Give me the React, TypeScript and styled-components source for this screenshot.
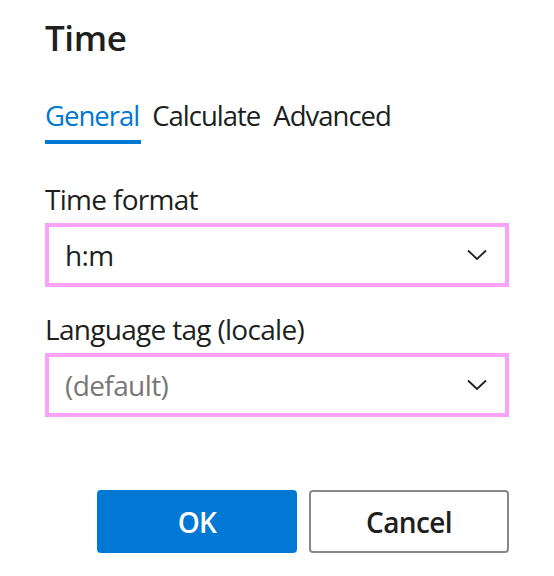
import styled, { createGlobalStyle } from 'styled-components';

const GlobalStyle = createGlobalStyle`
  html, body {
    margin: 0;
    padding: 0;
    background: #ffffff;
  }
  body {
    font-family: 'Open Sans', 'Noto Sans', sans-serif;
    color: #201f1e;
  }
`;

const Dialog = styled.div`
  width: 554px;
  height: 576px;
  box-sizing: border-box;
  padding: 12px 45px 0 45px;
  display: flex;
  flex-direction: column;
`;

const Title = styled.h1`
  margin: 0;
  font-size: 35px;
  line-height: 52px;
  font-weight: 600;
  letter-spacing: -0.4px;
`;

const TabList = styled.div`
  display: flex;
  gap: 13px;
  margin-top: 32px;
`;

const Tab = styled.button<{ $active?: boolean }>`
  display: flex;
  flex-direction: column;
  align-items: stretch;
  padding: 0;
  border: 0;
  background: none;
  font-family: inherit;
  font-size: 27.5px;
  line-height: 40px;
  letter-spacing: -1px;
  color: ${(p) => (p.$active ? '#0078d4' : '#201f1e')};
  cursor: pointer;

  &::after {
    content: '';
    height: 4px;
    margin-top: 4px;
    margin-right: -2px;
    background: ${(p) => (p.$active ? '#0078d4' : 'transparent')};
  }
`;

const Field = styled.div<{ $first?: boolean }>`
  display: flex;
  flex-direction: column;
  margin-top: ${(p) => (p.$first ? '35px' : '22px')};
`;

const Label = styled.label`
  font-size: 28px;
  line-height: 40px;
  letter-spacing: -0.7px;
  margin-bottom: 4px;
`;

const Dropdown = styled.div<{ $placeholder?: boolean }>`
  height: 64px;
  box-sizing: border-box;
  border: 4px solid #faa2f7;
  display: flex;
  align-items: center;
  justify-content: space-between;
  padding: 0 18px 0 16px;
  font-size: 28px;
  letter-spacing: -0.6px;
  color: ${(p) => (p.$placeholder ? '#797775' : '#201f1e')};
`;

const Actions = styled.div`
  display: flex;
  justify-content: flex-end;
  gap: 12px;
  margin-top: 73px;
`;

const Button = styled.button<{ $primary?: boolean }>`
  width: 200px;
  height: 63px;
  box-sizing: border-box;
  border-radius: 4px;
  border: 2px solid ${(p) => (p.$primary ? '#0078d4' : '#8a8886')};
  background: ${(p) => (p.$primary ? '#0078d4' : '#ffffff')};
  color: ${(p) => (p.$primary ? '#ffffff' : '#201f1e')};
  font-family: inherit;
  font-size: 28px;
  font-weight: 600;
  letter-spacing: -0.6px;
  cursor: pointer;
`;

const Chevron = () => (
  <svg width="20" height="12" viewBox="0 0 20 12" fill="none">
    <path d="M1 1.5 L10 10 L19 1.5" stroke="#201f1e" strokeWidth="1.8" />
  </svg>
);

export default function App() {
  return (
    <>
      <GlobalStyle />
      <Dialog>
        <Title>Time</Title>
        <TabList>
          <Tab $active>General</Tab>
          <Tab>Calculate</Tab>
          <Tab>Advanced</Tab>
        </TabList>
        <Field $first>
          <Label>Time format</Label>
          <Dropdown>
            <span>h:m</span>
            <Chevron />
          </Dropdown>
        </Field>
        <Field>
          <Label>Language tag (locale)</Label>
          <Dropdown $placeholder>
            <span>(default)</span>
            <Chevron />
          </Dropdown>
        </Field>
        <Actions>
          <Button $primary>OK</Button>
          <Button>Cancel</Button>
        </Actions>
      </Dialog>
    </>
  );
}
